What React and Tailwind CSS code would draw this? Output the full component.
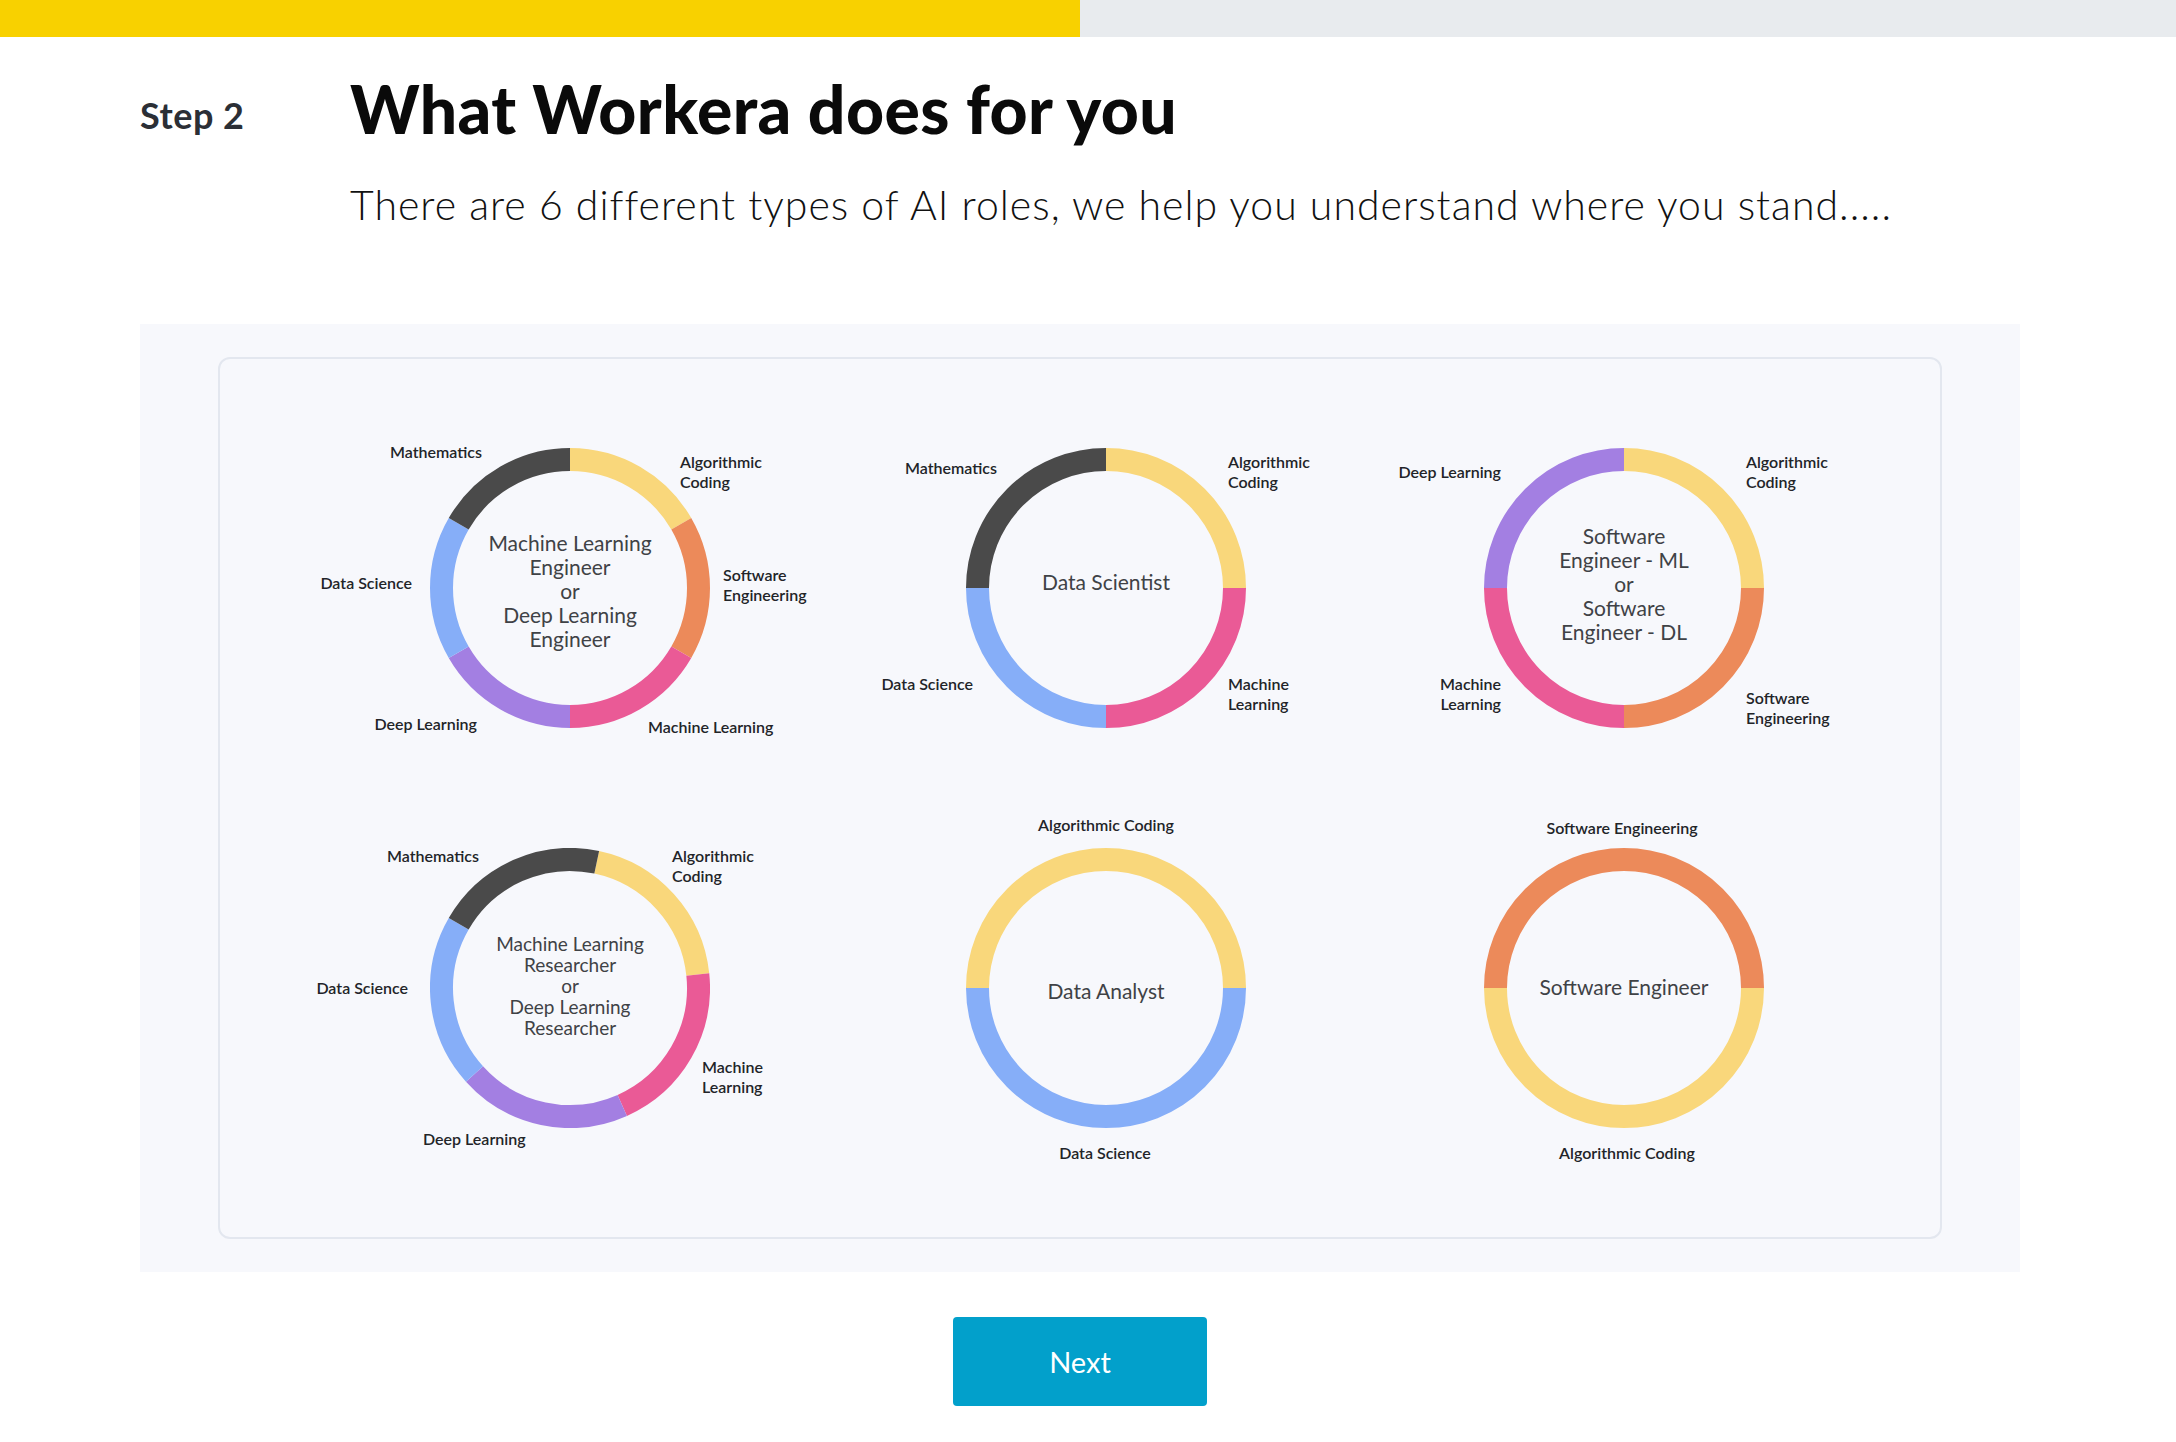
import React from "react";

const C = {
  alg: "#F9D77B",
  se: "#EC8A5A",
  ml: "#EA5A96",
  dl: "#A37FE2",
  ds: "#86AEF8",
  math: "#4A4A4A",
};

function arcPath(cx, cy, r, a0, a1) {
  const rad = (d) => ((d - 90) * Math.PI) / 180;
  const x0 = cx + r * Math.cos(rad(a0));
  const y0 = cy + r * Math.sin(rad(a0));
  const x1 = cx + r * Math.cos(rad(a1));
  const y1 = cy + r * Math.sin(rad(a1));
  const large = a1 - a0 > 180 ? 1 : 0;
  return `M ${x0} ${y0} A ${r} ${r} 0 ${large} 1 ${x1} ${y1}`;
}

const charts = [
  {
    segs: [
      [C.alg, 0, 60],
      [C.se, 60, 120],
      [C.ml, 120, 180],
      [C.dl, 180, 240],
      [C.ds, 240, 300],
      [C.math, 300, 360],
    ],
    center: ["Machine Learning", "Engineer", "or", "Deep Learning", "Engineer"],
    centerCls: "text-[21px] leading-[24px] translate-y-[3px]",
    labels: [
      { t: ["Mathematics"], cls: "right-[338px] top-[64px] text-right" },
      { t: ["Algorithmic", "Coding"], cls: "left-[360px] top-[84px]" },
      { t: ["Software", "Engineering"], cls: "left-[403px] top-[197px]" },
      { t: ["Data Science"], cls: "right-[408px] top-[195px] text-right" },
      { t: ["Deep Learning"], cls: "right-[343px] top-[336px] text-right" },
      { t: ["Machine Learning"], cls: "left-[328px] top-[339px]" },
    ],
  },
  {
    segs: [
      [C.alg, 0, 90],
      [C.ml, 90, 180],
      [C.ds, 180, 270],
      [C.math, 270, 360],
    ],
    center: ["Data Scientist"],
    centerCls: "text-[21px] leading-[24px] -translate-y-[6px]",
    labels: [
      { t: ["Mathematics"], cls: "right-[359px] top-[80px] text-right" },
      { t: ["Algorithmic", "Coding"], cls: "left-[372px] top-[84px]" },
      { t: ["Data Science"], cls: "right-[383px] top-[296px] text-right" },
      { t: ["Machine", "Learning"], cls: "left-[372px] top-[306px]" },
    ],
  },
  {
    segs: [
      [C.alg, 0, 90],
      [C.se, 90, 180],
      [C.ml, 180, 270],
      [C.dl, 270, 360],
    ],
    center: ["Software", "Engineer - ML", "or", "Software", "Engineer - DL"],
    centerCls: "text-[21px] leading-[24px] -translate-y-[4px]",
    labels: [
      { t: ["Deep Learning"], cls: "right-[373px] top-[84px] text-right" },
      { t: ["Algorithmic", "Coding"], cls: "left-[372px] top-[84px]" },
      { t: ["Machine", "Learning"], cls: "right-[373px] top-[306px] text-right" },
      { t: ["Software", "Engineering"], cls: "left-[372px] top-[320px]" },
    ],
  },
  {
    segs: [
      [C.alg, 12, 84],
      [C.ml, 84, 156],
      [C.dl, 156, 228],
      [C.ds, 228, 300],
      [C.math, 300, 372],
    ],
    center: ["Machine Learning", "Researcher", "or", "Deep Learning", "Researcher"],
    centerCls: "text-[19px] leading-[21px] -translate-y-[3px]",
    labels: [
      { t: ["Mathematics"], cls: "right-[341px] top-[68px] text-right" },
      { t: ["Algorithmic", "Coding"], cls: "left-[352px] top-[78px]" },
      { t: ["Data Science"], cls: "right-[412px] top-[200px] text-right" },
      { t: ["Machine", "Learning"], cls: "left-[382px] top-[289px]" },
      { t: ["Deep Learning"], cls: "left-[103px] top-[351px]" },
    ],
  },
  {
    segs: [
      [C.alg, -90, 90],
      [C.ds, 90, 270],
    ],
    center: ["Data Analyst"],
    centerCls: "text-[21px] leading-[24px] translate-y-[3px]",
    labels: [
      { t: ["Algorithmic Coding"], cls: "left-[250px] top-[37px] -translate-x-1/2 text-center" },
      { t: ["Data Science"], cls: "left-[249px] top-[365px] -translate-x-1/2 text-center" },
    ],
  },
  {
    segs: [
      [C.se, -90, 90],
      [C.alg, 90, 270],
    ],
    center: ["Software Engineer"],
    centerCls: "text-[21px] leading-[24px] -translate-y-[1px]",
    labels: [
      { t: ["Software Engineering"], cls: "left-[248px] top-[40px] -translate-x-1/2 text-center" },
      { t: ["Algorithmic Coding"], cls: "left-[253px] top-[365px] -translate-x-1/2 text-center" },
    ],
  },
];

function Donut({ segs }) {
  return (
    <svg width="280" height="280" viewBox="0 0 280 280">
      {segs.map(([color, a0, a1], i) => (
        <path
          key={i}
          d={arcPath(140, 140, 128.5, a0, a1)}
          fill="none"
          stroke={color}
          strokeWidth="23"
          strokeLinecap="butt"
        />
      ))}
    </svg>
  );
}

function Chart({ chart }) {
  return (
    <div className="relative w-[500px] h-[400px] flex items-center justify-center">
      <Donut segs={chart.segs} />
      <div className="absolute inset-0 flex items-center justify-center">
        <div className={`text-center text-[#3F4246] ${chart.centerCls}`}>
          {chart.center.map((line, i) => (
            <div key={i}>{line}</div>
          ))}
        </div>
      </div>
      {chart.labels.map((l, i) => (
        <div
          key={i}
          className={`absolute -translate-y-1/2 whitespace-nowrap text-[16px] leading-[20px] font-semibold text-[#222428] ${l.cls}`}
        >
          {l.t.map((line, j) => (
            <div key={j}>{line}</div>
          ))}
        </div>
      ))}
    </div>
  );
}

export default function App() {
  return (
    <div className="min-h-screen w-full bg-white font-['Lato',sans-serif]">
      <div className="flex h-[37px] w-full">
        <div className="w-[1080px] bg-[#F8D100]" />
        <div className="flex-1 bg-[#E8EBEE]" />
      </div>

      <div className="flex pl-[140px] pt-[33px]">
        <div className="w-[210px] pt-[24px] text-[36px] leading-[42px] font-bold tracking-[0.5px] text-[#2B2F36]">
          Step 2
        </div>
        <div>
          <h1 className="text-[66px] leading-[78px] font-black tracking-[0.4px] text-[#0A0A0A]">
            What Workera does for you
          </h1>
          <p className="mt-[33px] text-[41px] leading-[48px] font-light tracking-[1px] text-[#111111]">
            There are 6 different types of AI roles, we help you understand where you stand.....
          </p>
        </div>
      </div>

      <div className="ml-[140px] w-[1880px]">
        <div className="mt-[95px] h-[948px] bg-[#F7F8FC] px-[78px] pt-[33px]">
          <div className="h-[882px] rounded-[12px] border-2 border-[#E3E7EF] pl-[100px] pt-[29px]">
            <div className="grid grid-cols-[536px_518px_500px] grid-rows-[400px_400px]">
              {charts.map((c, i) => (
                <Chart key={i} chart={c} />
              ))}
            </div>
          </div>
        </div>

        <div className="mt-[45px] flex justify-center">
          <button className="flex h-[89px] w-[254px] items-center justify-center rounded-[4px] bg-[#02A0CB] text-[29px] text-white">
            Next
          </button>
        </div>
      </div>
    </div>
  );
}
